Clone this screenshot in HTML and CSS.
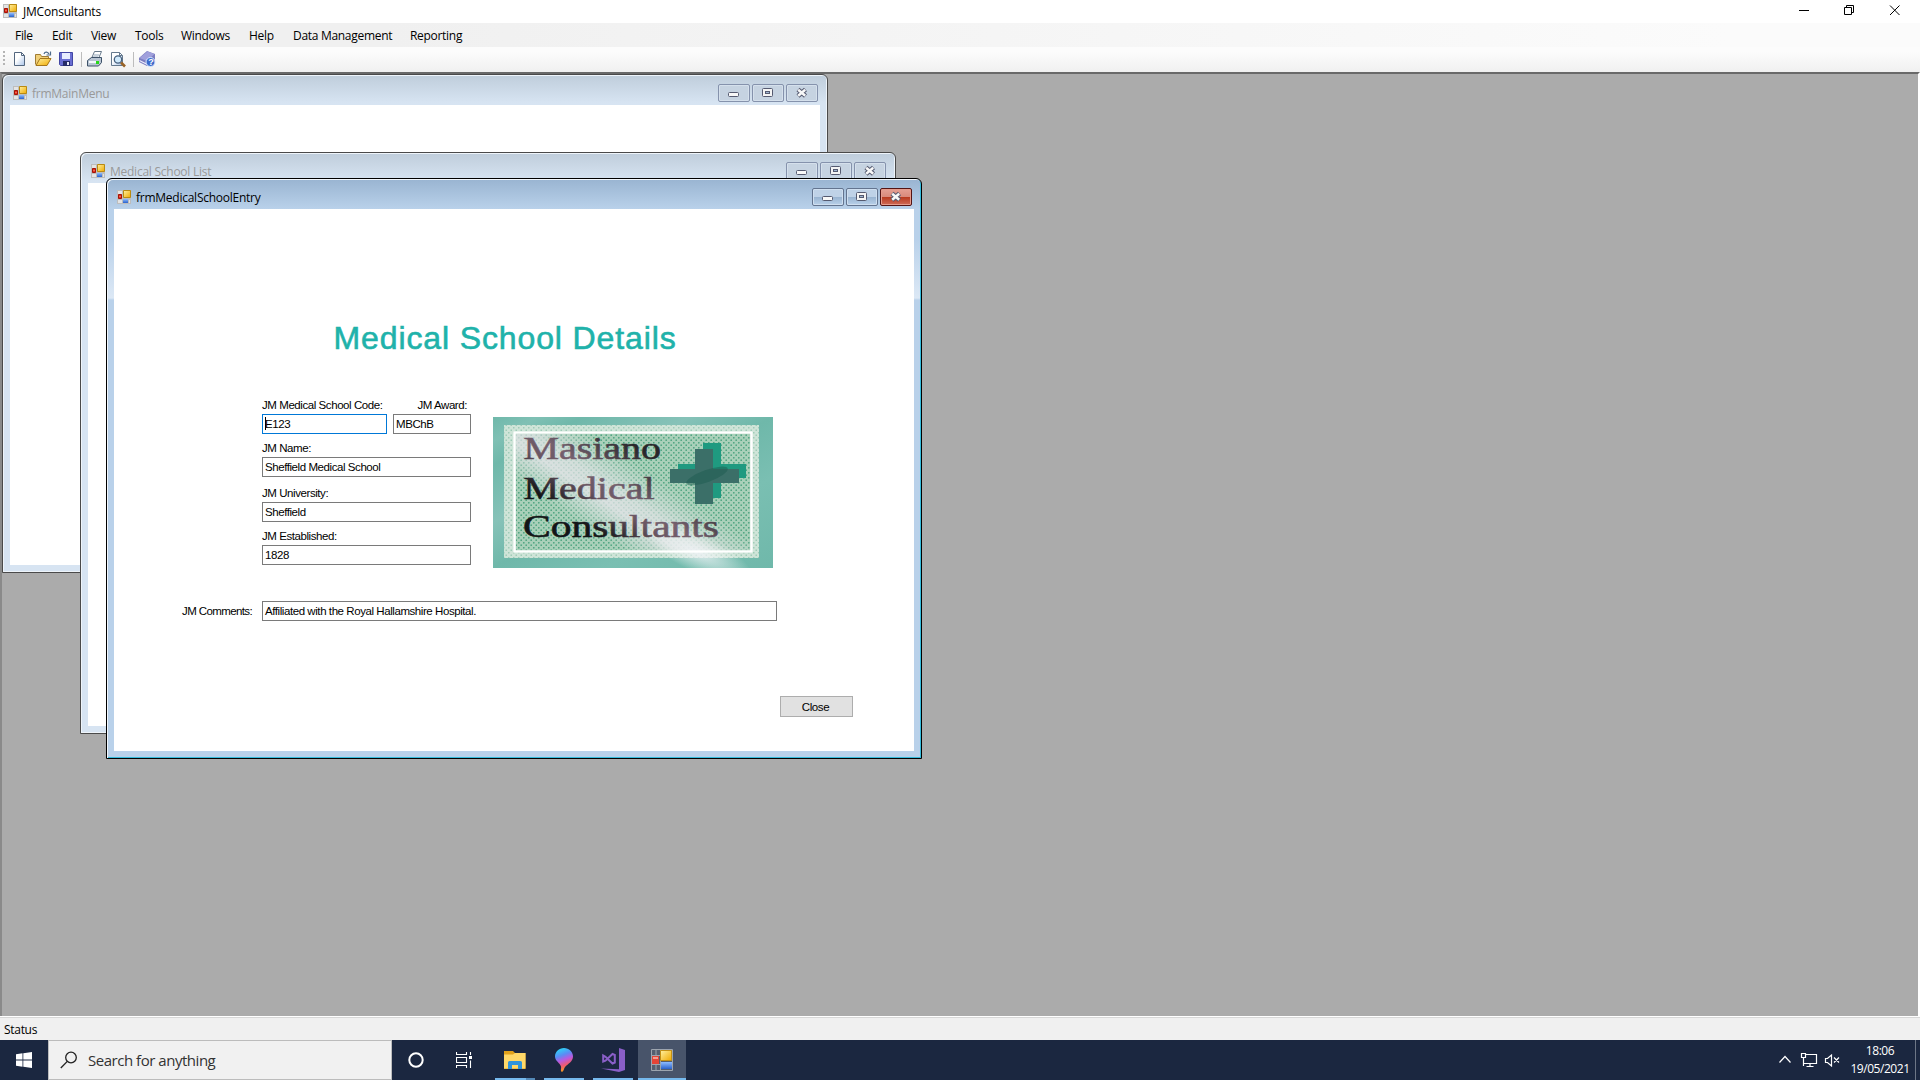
FILE: index.html
```html
<!DOCTYPE html>
<html lang="en">
<head>
<meta charset="utf-8">
<title>JMConsultants</title>
<link rel="stylesheet" href="styles.css">
</head>
<body>
<svg class="defs" width="0" height="0">
  <defs>
    <linearGradient id="gold" x1="0" y1="0" x2="1" y2="1"><stop offset="0" stop-color="#fff0a0"/><stop offset="1" stop-color="#f0aa00"/></linearGradient>
    <linearGradient id="blue" x1="0" y1="0" x2="0" y2="1"><stop offset="0" stop-color="#8ebcff"/><stop offset="1" stop-color="#2a62cc"/></linearGradient>
    <linearGradient id="paper" x1="0" y1="0" x2="1" y2="1"><stop offset=".4" stop-color="#fff"/><stop offset="1" stop-color="#a9c3e8"/></linearGradient>
    <symbol id="app" viewBox="0 0 14 14">
      <path d="M0 0h14v14H0z" fill="#bdbdbd"/>
      <path d="M1 1h4v3H1zM1 10h4v3H1zM12 10h1v3h-1z" fill="#e4e4e4"/>
      <path d="M6.500.5h7v7h-7z" fill="url(#gold)" stroke="#b98a12"/>
      <path d="M1.500 4.500h3v4h-3z" fill="#e2321c" stroke="#a51208"/>
      <path d="M2.500 6h1v1h-1z" fill="#ff9a8c"/>
      <path d="M6 9h5v4H6z" fill="url(#blue)"/>
    </symbol>
    <symbol id="cap-min" viewBox="1 1 30 16"><rect x="10.500" y="8.500" width="10" height="4" rx="1" fill="#f8f8f8" stroke="#555a70"/></symbol>
    <symbol id="cap-max" viewBox="1 1 30 16"><rect x="10.500" y="4.500" width="10" height="8" rx="1" fill="#f4f4f4" stroke="#555a70"/><rect x="13.500" y="7.500" width="4" height="2" fill="#9db4d0" stroke="#555a70"/></symbol>
    <symbol id="cap-close" viewBox="1 1 30 16"><path d="M12 5.500l7.500 6.500M19.500 5.500L12 12" stroke="#555a70" stroke-width="4.600"/><path d="M12.200 5.700l7 6M19.200 5.700l-7 6" stroke="#f8f8f8" stroke-width="2.500"/></symbol>
  </defs>
</svg>

<header class="titlebar">
  <svg class="app-icon" width="14" height="14"><use href="#app"/></svg>
  <span class="titlebar-text">JMConsultants</span>
  <svg class="win-controls" width="112" height="23" fill="none" stroke="#000">
    <path d="M4 10.500h10M49.500 7.500h7v7h-7zM51.500 7.500v-2h7v7h-2M95 5.500l9.500 9.500M104.500 5.500L95 15"/>
  </svg>
</header>

<nav class="menubar">
  <span class="m-file">File</span><span class="m-edit">Edit</span><span class="m-view">View</span><span class="m-tools">Tools</span><span class="m-windows">Windows</span><span class="m-help">Help</span><span class="m-data">Data Management</span><span class="m-report">Reporting</span>
</nav>

<div class="toolbar">
  <svg width="160" height="25" fill="none">
    <path d="M4 4v14" stroke="#b5b5b5" stroke-width="2" stroke-dasharray="2 2"/>
    <path d="M14.500 5.500h7l3 3v10h-10z" fill="url(#paper)" stroke="#54677f"/><path d="M21.500 5.500v3h3" stroke="#54677f"/>
    <path d="M35.500 17.500v-10h5l1 2h7v3" fill="#f0cf78" stroke="#a17c33"/><path d="M36 18.500l4-7h11l-4 7z" fill="url(#gold)" stroke="#a4761b"/><path d="M44 7c1-3 4-2 5 0M50.500 4.500v3.500h-4" stroke="#4f6c8c" stroke-width="1.200"/>
    <path d="M59.500 5.500h13v13h-12l-1-1z" fill="#6a6ed2" stroke="#4246a4"/><path d="M62 6h8v6h-8z" fill="#e8edff"/><path d="M63 14h7v5h-7z" fill="#252b67"/><path d="M67 15h2v3h-2z" fill="#e9e9f8"/>
    <path d="M81.500 5v15M133.500 5v15" stroke="#bdbdbd"/>
    <path d="M91.500 11.500l3-7h7l-3 7z" fill="#fff" stroke="#66788a"/><path d="M94 8h5M93 10h5" stroke="#92a6ba"/><path d="M87.500 13.500l4-3h10v5l-3 3.500h-11z" fill="#b9c5d3" stroke="#3d5168"/><path d="M89 15h7" stroke="#f4f8fc" stroke-width="2"/><path d="M96 14h3v3h-3z" fill="#28d818"/>
    <path d="M111.500 5.500h8l3 3v10h-11z" fill="url(#paper)" stroke="#65798d"/><path d="M119.500 5.500v3h3" stroke="#65798d"/><circle cx="118" cy="12.500" r="3.700" fill="#d0eafc" stroke="#48617e" stroke-width="1.300"/><path d="M121 15.500l4 4" stroke="#986327" stroke-width="2.600"/>
    <path d="M139 11l8-7 8 3v6l-8 6-8-4z" fill="#7c7dc0"/><path d="M139.500 13.500l7 3.500 4-3" stroke="#ececfc" stroke-width="1.200"/><path d="M139.500 11l8-6.500 7 2.500-7.500 7z" fill="#a0a0dc"/><circle cx="150.500" cy="15" r="4.500" fill="#3c6ccd" stroke="#dce9ff"/><text x="148.300" y="18" class="help-q">?</text>
  </svg>
</div>

<main class="mdi">
  <section class="child main-menu">
    <div class="caption">
      <svg class="app-icon" width="14" height="14"><use href="#app"/></svg><span class="caption-text">frmMainMenu</span>
      <div class="cap-btns"><svg class="cap"><use href="#cap-min"/></svg><svg class="cap"><use href="#cap-max"/></svg><svg class="cap"><use href="#cap-close"/></svg></div>
    </div>
    <div class="client"></div>
  </section>

  <section class="child school-list">
    <div class="caption">
      <svg class="app-icon" width="14" height="14"><use href="#app"/></svg><span class="caption-text">Medical School List</span>
      <div class="cap-btns"><svg class="cap"><use href="#cap-min"/></svg><svg class="cap"><use href="#cap-max"/></svg><svg class="cap"><use href="#cap-close"/></svg></div>
    </div>
    <div class="client"></div>
  </section>

  <section class="child active school-entry">
    <div class="caption">
      <svg class="app-icon" width="14" height="14"><use href="#app"/></svg><span class="caption-text">frmMedicalSchoolEntry</span>
      <div class="cap-btns"><svg class="cap"><use href="#cap-min"/></svg><svg class="cap"><use href="#cap-max"/></svg><svg class="cap cap-red"><use href="#cap-close"/></svg></div>
    </div>
    <div class="client form">
      <h1>Medical School Details</h1>
      <div class="details">
        <div class="fields">
          <div class="pair">
            <div class="field code"><label>JM Medical School Code:</label><div class="box focus"><i class="caret"></i>E123</div></div>
            <div class="field award"><label>JM Award:</label><div class="box">MBChB</div></div>
          </div>
          <div class="field name"><label>JM Name:</label><div class="box">Sheffield Medical School</div></div>
          <div class="field university"><label>JM University:</label><div class="box">Sheffield</div></div>
          <div class="field established"><label>JM Established:</label><div class="box">1828</div></div>
        </div>
        <svg class="logo" width="280" height="151" viewBox="0 0 280 151">
          <defs>
            <pattern id="dots" width="5" height="5" patternUnits="userSpaceOnUse"><path d="M0 0h1.500v1.500H0zM2.500 2.500h1.500v1.500h-1.500z" fill="#3f9d77"/></pattern>
            <linearGradient id="sheen" gradientUnits="userSpaceOnUse" x1="70" y1="100" x2="125" y2="17">
              <stop offset=".05" stop-color="#e9e6ec" stop-opacity="0"/><stop offset=".36" stop-color="#e9e6ec" stop-opacity=".75"/><stop offset=".52" stop-color="#e9e6ec" stop-opacity=".65"/><stop offset=".85" stop-color="#e9e6ec" stop-opacity="0"/>
            </linearGradient>
            <linearGradient id="ink" gradientUnits="userSpaceOnUse" x1="70" y1="100" x2="125" y2="17">
              <stop offset=".05" stop-color="#131517"/><stop offset=".38" stop-color="#6a5663"/><stop offset=".55" stop-color="#75606e"/><stop offset="1" stop-color="#282629"/>
            </linearGradient>
            <linearGradient id="edge" x1="0" y1="0" x2="1" y2="1"><stop offset="0" stop-color="#6fb8aa"/><stop offset=".08" stop-color="#7fc0b4"/><stop offset=".16" stop-color="#6fb8aa"/><stop offset=".35" stop-color="#86c2b8"/><stop offset=".5" stop-color="#6fb8aa"/><stop offset=".7" stop-color="#7abfb2"/><stop offset="1" stop-color="#6fb8aa"/></linearGradient>
            <radialGradient id="glow"><stop offset="0" stop-color="#f2f3f8" stop-opacity=".8"/><stop offset="1" stop-color="#fff" stop-opacity="0"/></radialGradient>
          </defs>
          <path d="M0 0h280v151H0z" fill="url(#edge)"/>
          <path d="M11 8h255v133H11z" fill="#cfe4d8"/>
          <path d="M20 14h240v122H20z" fill="#a9d0b9"/>
          <path d="M11 8h255v133H11z" fill="url(#dots)" opacity=".34"/>
          <path d="M23 17h234v116H23z" fill="url(#dots)" opacity=".7"/>
          <path d="M23 17h234v116H23z" fill="url(#sheen)"/>
          <ellipse cx="205" cy="136" rx="58" ry="19" transform="rotate(24 205 136)" fill="url(#glow)"/>
          <path d="M21.500 15.500h237v119h-237z" fill="none" stroke="#fff" stroke-width="2.600"/>
          <path d="M210 26h18v21h25v14h-25v20h-18V61h-25V47h25z" fill="#1f9a80"/>
          <path d="M202 32h18v20h26v14h-26v21h-18V66h-25V52h25z" fill="#3b6f68"/>
          <ellipse cx="214" cy="59" rx="22" ry="6" transform="rotate(-20 214 59)" fill="#1e5b50" opacity=".5"/>
          <g class="logo-text" fill="url(#ink)" stroke="url(#ink)" stroke-width=".6">
            <text x="30.500" y="41.500" textLength="137.500" lengthAdjust="spacingAndGlyphs">Masiano</text>
            <text x="30.500" y="82" textLength="131" lengthAdjust="spacingAndGlyphs">Medical</text>
            <text x="30" y="120" textLength="196" lengthAdjust="spacingAndGlyphs">Consultants</text>
          </g>
        </svg>
      </div>
      <div class="comments"><label>JM Comments:</label><div class="box">Affiliated with the Royal Hallamshire Hospital.</div></div>
      <div class="actions"><button type="button" class="close-btn">Close</button></div>
    </div>
  </section>
</main>

<footer class="status">Status</footer>

<div class="taskbar">
  <div class="start"><svg width="16" height="16" fill="#fff"><path d="M0 2.200L6.500 1.300V7.500H0zM7.300 1.200L16 0v7.500H7.300zM0 8.400h6.500v6.300L0 13.800zM7.300 8.400H16V16l-8.700-1.200z"/></svg></div>
  <div class="search">
    <svg width="18" height="18" fill="none" stroke="#222" stroke-width="1.300"><circle cx="11" cy="6.500" r="5.300"/><path d="M7.300 10.400L.8 17"/></svg>
    <span>Search for anything</span>
  </div>
  <div class="task t-cortana"><svg width="16" height="16" fill="none"><circle cx="8" cy="8" r="6.700" stroke="#fff" stroke-width="2"/></svg></div>
  <div class="task t-view"><svg width="16" height="16" fill="none" stroke="#fff"><path d="M.5 0v2.500h10V0M.5 5.500h10v5H.5zM.5 16v-2.500h10V16M14.500 0v3M14.500 8.500V16" stroke-width="1.100"/><path d="M13 4h3v3h-3z" fill="#fff" stroke="none"/></svg></div>
  <div class="task t-explorer"><svg width="22" height="18"><path d="M0 0h9l2 2h10.500v16H0z" fill="#e1a11a"/><path d="M0 3.500h9l2-1.500h10.500v15.500H0z" fill="#ffd868"/><path d="M4 18v-6.500Q4 10 5.500 10h11Q18 10 18 11.500V18h-4v-4H8v4z" fill="#2f94dc"/></svg></div>
  <div class="task t-paint"><svg width="18" height="24"><defs><linearGradient id="pin" x1=".3" y1="0" x2=".6" y2="1"><stop offset="0" stop-color="#28d8f8"/><stop offset=".3" stop-color="#5a8cf4"/><stop offset=".5" stop-color="#b85ae0"/><stop offset=".72" stop-color="#ef5a70"/><stop offset="1" stop-color="#ffb000"/></linearGradient></defs><path d="M9 0c5 0 9 3.800 9 8.600 0 5-5 7.400-8 10.400-1.500 2-1 4-3 5-2-1-.5-3-1-5.500C5 15 0 13 0 8.600 0 3.800 4 0 9 0z" fill="url(#pin)"/></svg></div>
  <div class="task t-vs"><svg width="24" height="24"><path d="M18 0l6 2v20l-6 2L0 20.500l18 .8z" fill="#8a5fc8"/><path d="M2.200 7.500v6l2.300-.8L11.500 6l2.300 1v7.500l-2.300 1-7-6.700z" fill="none" stroke="#8a5fc8" stroke-width="2"/></svg></div>
  <div class="task t-app"><svg width="22" height="22" viewBox="0 0 22 22"><path d="M.5.500h21v21H.5zM.5 6.500h21M.5 15.500h21M5 .5v21M9.500.5v21" fill="#535e6f" stroke="#9ca4ae"/><path d="M9.500 1.500h11v10h-11z" fill="url(#gold)" stroke="#c49014"/><path d="M1 7h7v8H1z" fill="#e44436"/><path d="M2 8h5v2H2z" fill="#f49c90"/><path d="M10 13h11v7H10z" fill="url(#blue)"/></svg></div>
  <div class="tray">
    <svg width="62" height="16" fill="none" stroke="#fff" stroke-width="1.200"><path d="M.5 10.500l5.500-6 5.500 6M26 2.500h11.500v9H24.500M22.500 1.500h4v4h-4zM24.500 6v8M31 12v2.500M27.500 14.500h7M46.500 6.500h2l4-3.500v11l-4-3.500h-2zM55 5.500l5 5M60 5.500l-5 5"/></svg>
    <div class="clock"><span>18:06</span><span>19/05/2021</span></div>
  </div>
</div>
</body>
</html>
```
FILE: styles.css
```css
* { box-sizing: border-box; }
body {
  margin: 0;
  width: 1920px;
  height: 1080px;
  overflow: hidden;
  display: flex;
  flex-direction: column;
  font: 12px/16px "Open Sans", "Noto Sans", sans-serif;
  letter-spacing: -0.3px;
  color: #000;
  background: #f0f0f0;
}
svg { display: block; flex: none; }
.defs { height: 0; }

.titlebar { height: 23px; flex: none; display: flex; background: #fff; padding-left: 3px; }
.titlebar .app-icon { margin-top: 4px; }
.titlebar-text { margin: 4px 0 0 6px; letter-spacing: -.2px; }
.win-controls { margin-left: auto; margin-right: 13px; }

.menubar {
  height: 24px; flex: none;
  display: flex; align-items: center;
  padding: 1px 0 0 15px;
  background: linear-gradient(90deg, #f0f0f0 20%, #fbfbfb 90%);
}
.m-file { width: 37px; }
.m-edit { width: 39px; }
.m-view { width: 44px; }
.m-tools { width: 46px; }
.m-windows { width: 68px; }
.m-help { width: 44px; }
.m-data { width: 117px; }

.toolbar { height: 25px; flex: none; background: linear-gradient(#fcfcfc 20%, #f0f0f0); }
.help-q { font: bold 9px "Liberation Sans", sans-serif; fill: #fff; }

.mdi {
  position: relative;
  height: 944px; flex: none;
  background: #ababab;
  border: solid;
  border-width: 2px 2px 0;
  border-color: #696969 #fff #fff #8a8a8a;
  overflow: hidden;
}

.child {
  position: absolute;
  display: flex; flex-direction: column;
  padding: 0 7px 7px;
  border: 1px solid #4a4a4a;
  border-radius: 6px 6px 0 0;
  background: linear-gradient(#bfcddb, #d7e4f2 28px);
  box-shadow: inset 1px 1px #eef4fa, inset -1px -1px #eef4fa;
}
.main-menu { left: 0; top: 0; width: 826px; height: 499px; }
.school-list { left: 78px; top: 78px; width: 816px; height: 582px; }
.school-entry { left: 104px; top: 104px; width: 816px; height: 581px; }
.child.active {
  border-color: #000;
  background: linear-gradient(#99b4d1, #b9d1ea 30px, #b9d1ea 60px, #dce8f5 119px, #b9d1ea 121px);
  box-shadow: inset 1px 1px #f2f7fc, inset -1px -1px #35bcdc;
}
.caption { height: 30px; flex: none; display: flex; color: #999; letter-spacing: -.25px; }
.active .caption { color: #000; }
.caption .app-icon { margin: 11px 0 0 3px; }
.caption-text { margin: 11px 0 0 5px; }
.cap-btns { margin: 9px 2px 0 auto; display: flex; gap: 2px; }
.cap {
  width: 32px; height: 18px;
  border: 1px solid #8592ac; border-radius: 2px;
  background: #c6d3e1;
  box-shadow: inset 0 0 0 1px #d5e0ec;
}
.active .cap { border-color: #63748f; background: linear-gradient(#bfd2e7 48%, #98b3d0 50%, #b9d1ea); box-shadow: inset 0 0 0 1px #cfdff0; }
.active .cap-red { border-color: #541414; background: linear-gradient(#e5a094 0, #d98a7c 48%, #b8391e 50%, #cf6b58); box-shadow: inset 0 0 0 1px #e59b8c; }
.client { flex: 1; background: #fff; }

.form {
  display: flex; flex-direction: column;
  font: 11.5px/14px "Liberation Sans", Arial, sans-serif;
  letter-spacing: -.43px;
}
h1 {
  margin: 109px 0 0 219.5px;
  font: 32px/40px "Liberation Sans", Arial, sans-serif;
  letter-spacing: .88px;
  color: #20b2aa;
  -webkit-text-stroke: .6px #20b2aa;
  white-space: nowrap;
}
.details { display: flex; margin: 40px 0 0 148px; gap: 22px; align-items: flex-start; }
.fields { width: 209px; display: flex; flex-direction: column; }
.pair { display: flex; gap: 6px; }
.field { display: flex; flex-direction: column; }
.field label { height: 16px; white-space: nowrap; }
.code { width: 125px; }
.award { width: 78px; }
.award label { text-align: right; padding-right: 4px; }
.name { margin-top: 7px; }
.university { margin-top: 9px; }
.established { margin-top: 7px; }
.box { height: 20px; border: 1px solid #7a7a7a; background: #fff; padding: 2px 0 0 2px; white-space: nowrap; }
.box.focus { border-color: #0078d7; display: flex; }
.caret { width: 1px; height: 13px; background: #000; margin-right: -1px; }
.logo { margin-top: 19px; }
.logo-text { font: 32px "Liberation Serif", serif; letter-spacing: 0; }
.comments { display: flex; margin: 33px 0 0 68px; }
.comments label { width: 80px; padding-top: 3px; letter-spacing: -.6px; }
.comments .box { width: 515px; }
.actions { display: flex; margin: 75px 0 0 666px; }
.close-btn {
  width: 73px; height: 21px; padding: 0 2px 0 0;
  border: 1px solid #adadad; background: #e1e1e1; color: #000;
  font: 11.5px/14px "Liberation Sans", Arial, sans-serif;
  letter-spacing: -.43px;
}

.status { height: 24px; flex: none; border-top: 1px solid #fff; box-shadow: inset 0 1px #d7d7d7; background: #f0f0f0; padding: 5px 0 0 4px; }

.taskbar { height: 40px; flex: none; display: flex; background: #1b2740; }
.start { width: 48px; display: flex; align-items: center; justify-content: center; }
.search {
  width: 344px; display: flex; align-items: center; gap: 10px;
  padding-left: 11px;
  background: #f1f1f1; border: 1px solid #bcbcbc;
  font-size: 15px; letter-spacing: -.47px; color: #333;
}
.task { width: 48px; display: flex; align-items: center; justify-content: center; border-bottom: 2px solid transparent; padding-top: 2px; }
.t-view { margin-right: 7px; }
.t-explorer { width: 40px; margin-right: 9px; border: 0; padding: 0; background: linear-gradient(90deg, #76b9ed 31px, #5489b8 31px) bottom / 100% 2px no-repeat; }
.t-paint, .t-vs { width: 40px; border-color: #76b9ed; }
.t-paint { margin-right: 9px; }
.t-vs { margin-right: 5px; }
.t-app { background: #48546a; border-color: #76b9ed; }
.tray { margin-left: auto; display: flex; align-items: center; color: #fff; border-right: 1px solid #6d7686; margin-right: 4px; padding-right: 6px; gap: 10px; }
.clock { width: 58px; display: flex; flex-direction: column; align-items: center; line-height: 18px; letter-spacing: -.45px; }
```
